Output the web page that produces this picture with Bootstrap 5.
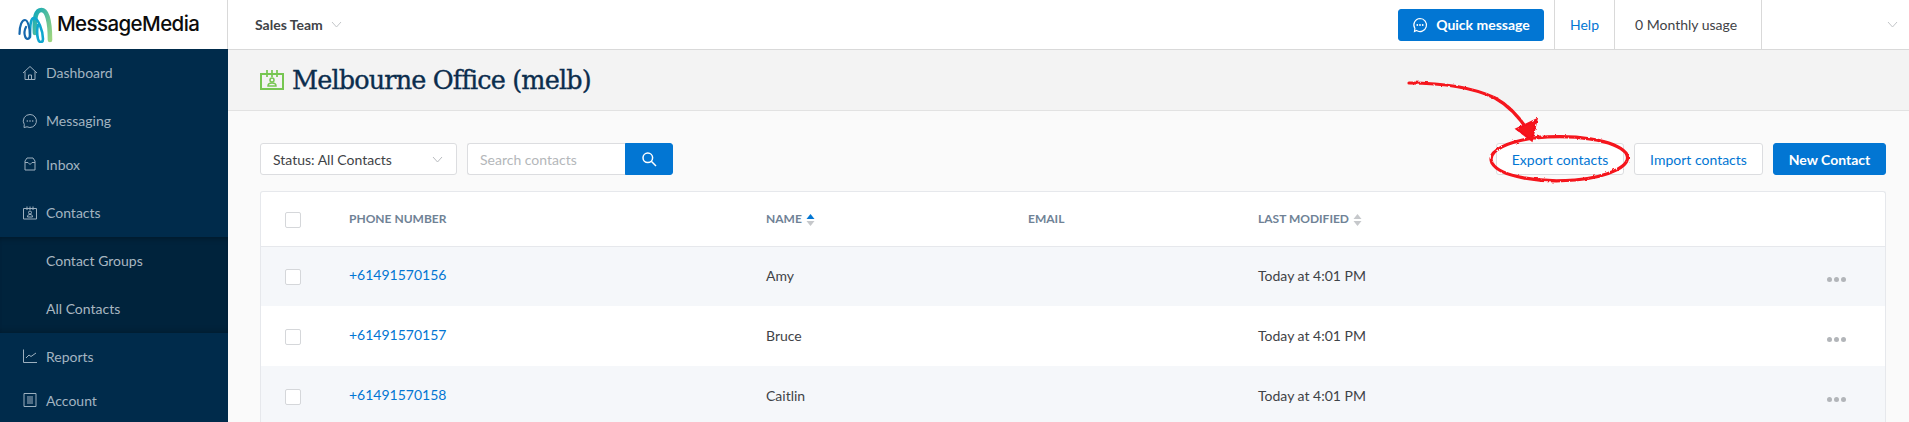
<!DOCTYPE html>
<html lang="en">
<head>
<meta charset="utf-8">
<title>Melbourne Office</title>
<link href="https://cdn.jsdelivr.net/npm/bootstrap@5.3.0/dist/css/bootstrap.min.css" rel="stylesheet">
<style>
html,body{height:422px;overflow:hidden}
body{font-family:Lato,"Liberation Sans",sans-serif;font-size:14px;color:#3f4347;background:#fafafa;position:relative}
.blue-btn{--bs-btn-bg:#0276d3;--bs-btn-border-color:#0276d3;--bs-btn-color:#fff;--bs-btn-hover-bg:#0268bb;--bs-btn-hover-border-color:#0268bb;font-weight:700;font-size:14px;height:32px;padding:0;display:flex;align-items:center;justify-content:center;border-radius:3px}
.white-btn{--bs-btn-bg:#fff;--bs-btn-border-color:#dcdde0;--bs-btn-color:#0276d3;--bs-btn-hover-bg:#f4f8fc;--bs-btn-hover-border-color:#dcdde0;--bs-btn-hover-color:#0276d3;font-size:14px;height:32px;padding:0;display:flex;align-items:center;justify-content:center;border-radius:3px}
.topbar{height:50px;background:#fff;border-bottom:1px solid #d9d9d9}
.brand-cell{width:228px;height:49px;border-right:1px solid #d9d9d9;flex:none}
.brand-text{font-family:Inter,sans-serif;font-weight:500;font-size:20.5px;letter-spacing:-.6px;color:#0c0c0c;margin-left:3px}
.team{margin-left:27px;font-weight:700;color:#3f4347;font-size:14px}
.qm-btn{width:146px;margin-right:10px}
.top-cell{height:49px;border-left:1px solid #d9d9d9;display:flex;align-items:center}
.help-cell{width:60px;padding-left:15px;color:#0276d3}
.usage-cell{width:147px;padding-left:20px}
.end-cell{width:148px;justify-content:flex-end;padding-right:11px}
.side{width:228px;height:373px;margin-top:-1px;background:#002b4b;flex:none;color:#9db0bf;position:relative}
.side-item{display:flex;align-items:center;height:48px;padding:0 0 2px 22px;color:#a3b4c1;text-decoration:none;font-size:14px}
.side-item svg{width:16px;height:16px;margin-right:8px;flex:none}
.h49{height:49px}.h45{height:45px;padding-bottom:0}.h44{height:44px}.h50{height:50px;padding-bottom:0;padding-top:1px}.h40{height:40px}
.side-sub{background:#00233c;box-shadow:inset 0 6px 6px -5px rgba(0,0,0,.35),inset 0 -6px 6px -5px rgba(0,0,0,.25)}
.side-sub .side-item{padding-left:46px;color:#a9b7c1}
.title-band{height:61px;background:#f3f3f3;border-bottom:1px solid #e2e2e2;padding-left:32px}
.title-band h1{font-family:"DejaVu Serif",serif;font-weight:400;font-size:25.5px;letter-spacing:-.85px;-webkit-text-stroke:.35px #0b2d4d;color:#0b2d4d;margin:0 0 0 8px}
.content{padding:32px 23px 0 32px}
.status-select{width:197px;height:32px;font-size:14px;color:#3f4347;padding:0 13px 0 12px;border:1px solid #dcdde0;border-radius:3px;background:#fff;display:flex;align-items:center;justify-content:space-between}
.search-grp{width:206px;margin-left:10px}
.search-grp .form-control{height:32px;font-size:14px;padding:0 12px;border:1px solid #dcdde0;border-right:0;border-radius:3px 0 0 3px;box-shadow:none}
.search-grp .form-control::placeholder{color:#b4b7ba}
.search-grp .btn{width:48px;border-radius:0 3px 3px 0;flex:none}
.exp-btn{width:128px;margin-right:10px}
.imp-btn{width:129px;margin-right:10px}
.new-btn{width:113px}
.table-card{margin-top:16px;background:#fff;border:1px solid #e6e8ec;border-bottom:0;border-radius:3px 3px 0 0;overflow:hidden}
.table-card .table{margin:0;table-layout:fixed;--bs-table-bg:transparent;color:#3f4347;font-size:14px}
.table-card th{height:54px;font-size:12px;font-weight:700;letter-spacing:0;color:#6f8296;vertical-align:middle;padding:0;border-bottom:1px solid #e6e8ec;text-transform:uppercase;white-space:nowrap}
.table-card td{height:60px;vertical-align:middle;padding:0 0 2px;border:0}
.table-card td.ph-cell{padding-bottom:4px}
.table-card td.act-cell{padding-bottom:0}
.table-card tr.odd-row td{background:#f5f7fa}
.table-card a{color:#0276d3;text-decoration:none}
.cb-col{width:88px}.ph-col{width:417px}.nm-col{width:262px}.em-col{width:230px}.act-col{width:58px}
.form-check-input.box{width:16px;height:16px;margin:0 0 0 24px;border:1px solid #d5d7da;border-radius:2px;vertical-align:middle;float:none}
.dots{display:inline-flex;gap:2px;vertical-align:middle;margin-top:3px}
.dots i{width:5px;height:5px;border-radius:50%;background:#b2b5b9;display:block}
.sorter{display:inline-block;vertical-align:middle;margin-left:1px}
.note{position:absolute;left:0;top:0;width:1909px;height:422px;pointer-events:none}
</style>
</head>
<body>
<header class="topbar d-flex align-items-center">
  <div class="brand-cell d-flex align-items-center">
    <svg width="38" height="36" viewBox="0 0 38 36" style="margin-left:16px" fill="none" stroke-linecap="round">
      <defs><linearGradient id="lg" x1="0" y1="0" x2="1" y2="1"><stop offset="0" stop-color="#13a9b8"/><stop offset="1" stop-color="#9bd47f"/></linearGradient></defs>
      <path d="M19 26C18 10 20 3 25.500 3C31 3 34 14 34 33" stroke="url(#lg)" stroke-width="4.600"/>
      <path d="M14 30C14 16 15 11 18 11C22 11 27 24 27 32C27 36 23 36 22 32C21 28 21 22 22 18" stroke="#0fa6cf" stroke-width="2.600"/>
      <path d="M3.500 27C3.500 18 6 13 9 13C12 13 14 22 14 28C14 33 10 33 9 29C8 26 9 22 10 20" stroke="#1667ad" stroke-width="2.200"/>
    </svg>
    <span class="brand-text">MessageMedia</span>
  </div>
  <div class="team d-flex align-items-center">Sales Team
    <svg class="ms-2" width="11" height="7" viewBox="0 0 11 7" fill="none" stroke="#c3c6c9"><path d="M1 1l4.500 5L10 1"/></svg>
  </div>
  <div class="ms-auto d-flex align-items-center">
    <button type="button" class="btn blue-btn qm-btn">
      <svg width="16" height="16" viewBox="0 0 16 16" fill="none" stroke="#fff" stroke-width="1.200" class="me-2"><path d="M8 1.500a6.500 6.500 0 1 1-3.500 12L2.500 14.500l.4-3A6.500 6.500 0 0 1 8 1.500z"/><g fill="#fff" stroke="none"><circle cx="5.300" cy="8" r=".9"/><circle cx="8" cy="8" r=".9"/><circle cx="10.700" cy="8" r=".9"/></g></svg>
      Quick message
    </button>
    <div class="top-cell help-cell">Help</div>
    <div class="top-cell usage-cell">0 Monthly usage</div>
    <div class="top-cell end-cell"><svg width="11" height="7" viewBox="0 0 11 7" fill="none" stroke="#c3c6c9"><path d="M1 1l4.500 5L10 1"/></svg></div>
  </div>
</header>
<div class="d-flex">
  <nav class="side">
    <a class="side-item h49" href="#"><svg viewBox="0 0 16 16" fill="none" stroke="#9db0bf"><path d="M1 8l7-6.500L15 8M3 6.500V14.500h10V6.500M6.500 14.500v-4.500h3v4.500"/></svg>Dashboard</a>
    <a class="side-item h45" href="#"><svg viewBox="0 0 16 16" fill="none" stroke="#9db0bf"><path d="M8 1.500a6.500 6.500 0 1 1-3 12.300L2 14.500l.3-3A6.500 6.500 0 0 1 8 1.500z"/><g fill="#9db0bf" stroke="none"><circle cx="5.300" cy="8" r=".8"/><circle cx="8" cy="8" r=".8"/><circle cx="10.700" cy="8" r=".8"/></g></svg>Messaging</a>
    <a class="side-item h44" href="#"><svg viewBox="0 0 16 16" fill="none" stroke="#9db0bf"><path d="M3 5l2-3h6l2 3v9H3zM3 6.500h3l2 2 2-2h3"/></svg>Inbox</a>
    <a class="side-item h50" href="#"><svg viewBox="0 0 16 16" fill="none" stroke="#9db0bf"><path d="M1.500 3.500h13v10.500h-13zM5 1.500v3.500M8 1.500v3.500M11 1.500v3.500"/><circle cx="8" cy="7.500" r="1.500"/><path d="M5.500 12c0-2 1-2.500 2.500-2.500s2.500.5 2.500 2.500z"/></svg>Contacts</a>
    <div class="side-sub">
      <a class="side-item" href="#">Contact Groups</a>
      <a class="side-item" href="#">All Contacts</a>
    </div>
    <a class="side-item" href="#"><svg viewBox="0 0 16 16" fill="none" stroke="#9db0bf"><path d="M1.500 1.500v13h13.500M4 10l3-3 2 1.500L14 5"/></svg>Reports</a>
    <a class="side-item h40" href="#"><svg viewBox="0 0 16 16" fill="none" stroke="#9db0bf"><path d="M2 1.500h12v13H2z"/><path d="M5 5h6M5 7h6M5 9h6M5 11h6" stroke-width="1.200"/></svg>Account</a>
  </nav>
  <main class="flex-grow-1">
    <div class="title-band d-flex align-items-center">
      <svg width="24" height="20" viewBox="0 0 24 20" fill="none" stroke="#76c651" stroke-width="2"><path d="M1 4h22v15H1z"/><path d="M7 0v7M12 0v7M17 0v7" stroke-width="1.700"/><circle cx="12" cy="10" r="2" stroke-width="1.500"/><path d="M8 16c0-2 2-3 4-3s4 1 4 3z" stroke-width="1.500"/></svg>
      <h1>Melbourne Office (melb)</h1>
    </div>
    <div class="content">
      <div class="d-flex align-items-center">
        <div class="status-select">Status: All Contacts <svg width="11" height="7" viewBox="0 0 11 7" fill="none" stroke="#b9bcc0"><path d="M1 1l4.500 5L10 1"/></svg></div>
        <div class="input-group search-grp flex-nowrap">
          <input type="text" class="form-control" placeholder="Search contacts">
          <button type="button" class="btn blue-btn" aria-label="Search"><svg width="16" height="16" viewBox="0 0 16 16" fill="none" stroke="#fff" stroke-width="1.500"><circle cx="6.800" cy="6.800" r="4.800"/><path d="M10.300 10.300L15 15"/></svg></button>
        </div>
        <button type="button" class="btn white-btn exp-btn ms-auto">Export contacts</button>
        <button type="button" class="btn white-btn imp-btn">Import contacts</button>
        <button type="button" class="btn blue-btn new-btn">New Contact</button>
      </div>
      <div class="table-card">
        <table class="table">
          <colgroup><col class="cb-col"><col class="ph-col"><col class="nm-col"><col class="em-col"><col><col class="act-col"></colgroup>
          <thead><tr>
            <th><input class="form-check-input box" type="checkbox" aria-label="Select all"></th>
            <th>Phone number</th>
            <th>Name <svg class="sorter" width="9" height="14" viewBox="0 0 9 14"><path d="M4.500 1l4 5H.5z" fill="#0276d3"/><path d="M4.500 13l4-5H.5z" fill="#c6c8cb"/></svg></th>
            <th>Email</th>
            <th>Last modified <svg class="sorter" width="9" height="14" viewBox="0 0 9 14"><path d="M4.500 1l4 5H.5z" fill="#c6c8cb"/><path d="M4.500 13l4-5H.5z" fill="#c6c8cb"/></svg></th>
            <th></th>
          </tr></thead>
          <tbody>
            <tr class="odd-row"><td><input class="form-check-input box" type="checkbox" aria-label="Select"></td><td class="ph-cell"><a href="#">+61491570156</a></td><td>Amy</td><td></td><td>Today at 4:01 PM</td><td class="act-cell"><span class="dots"><i></i><i></i><i></i></span></td></tr>
            <tr><td><input class="form-check-input box" type="checkbox" aria-label="Select"></td><td class="ph-cell"><a href="#">+61491570157</a></td><td>Bruce</td><td></td><td>Today at 4:01 PM</td><td class="act-cell"><span class="dots"><i></i><i></i><i></i></span></td></tr>
            <tr class="odd-row"><td><input class="form-check-input box" type="checkbox" aria-label="Select"></td><td class="ph-cell"><a href="#">+61491570158</a></td><td>Caitlin</td><td></td><td>Today at 4:01 PM</td><td class="act-cell"><span class="dots"><i></i><i></i><i></i></span></td></tr>
          </tbody>
        </table>
      </div>
    </div>
  </main>
</div>
<svg class="note" viewBox="0 0 1909 422" fill="none" stroke="#f5121b" stroke-linecap="round">
  <defs><filter id="rough" x="-5%" y="-5%" width="110%" height="110%"><feTurbulence type="fractalNoise" baseFrequency=".25" numOctaves="2" seed="4"/><feDisplacementMap in="SourceGraphic" scale="2.500"/></filter></defs>
  <g filter="url(#rough)">
    <path d="M1409 83C1440 83 1470 86 1495 98C1508 105 1520 118 1529 132" stroke-width="3.200"/>
    <path d="M1537 119L1516 129L1532 141Z" fill="#f5121b" stroke-width="1.500"/>
    <path d="M1535 138C1575 134 1615 140 1626 153C1634 165 1610 177 1575 180C1540 183 1500 177 1492 163C1486 150 1510 141 1540 137" stroke-width="3.200"/>
  </g>
</svg>
<script src="https://cdn.jsdelivr.net/npm/bootstrap@5.3.0/dist/js/bootstrap.bundle.min.js"></script>
</body>
</html>
